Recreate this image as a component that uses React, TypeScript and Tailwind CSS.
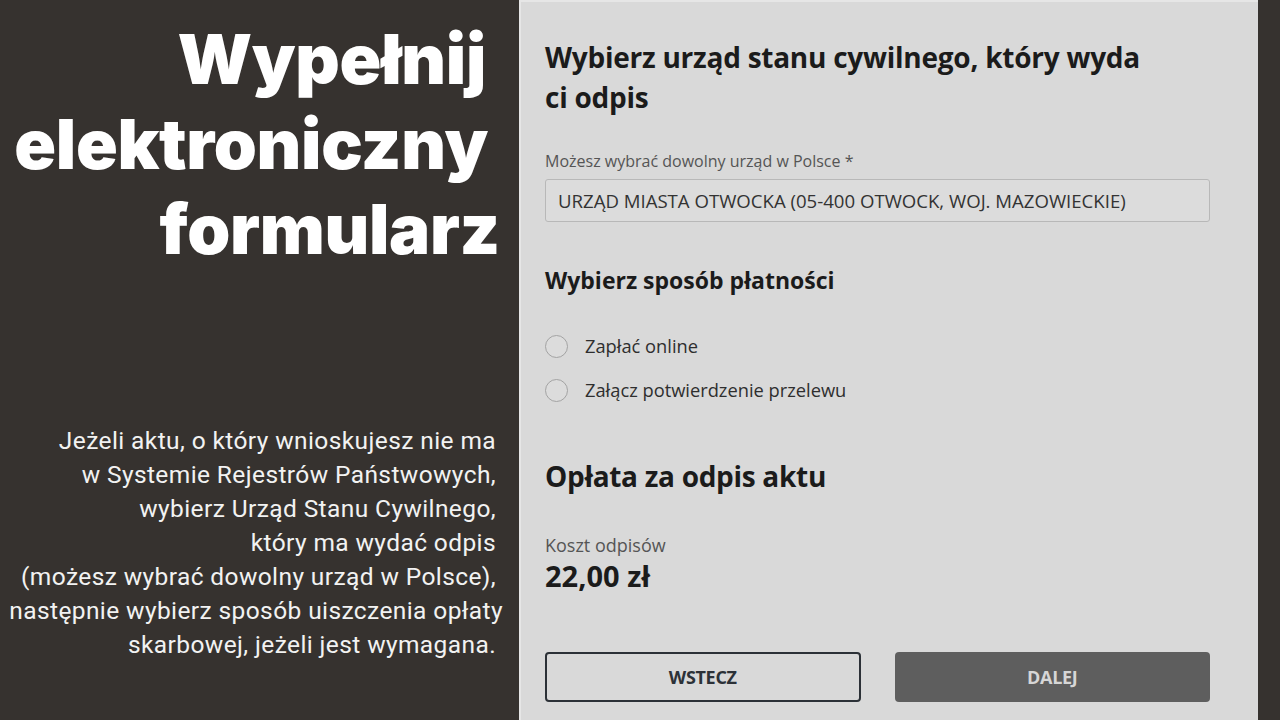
import { useState } from 'react'

type Payment = 'online' | 'przelew' | null

const paragraph = [
  'Jeżeli aktu, o który wnioskujesz nie ma',
  'w Systemie Rejestrów Państwowych,',
  'wybierz Urząd Stanu Cywilnego,',
  'który ma wydać odpis',
  '(możesz wybrać dowolny urząd w Polsce),',
  'następnie wybierz sposób uiszczenia opłaty',
  'skarbowej, jeżeli jest wymagana.',
]

function Radio({ label, checked, onClick }: { label: string; checked: boolean; onClick: () => void }) {
  return (
    <button onClick={onClick} className="flex items-center gap-[17px] text-left h-[24px]">
      <span className="w-[23px] h-[23px] rounded-full border-[1.5px] border-[#a3a3a3] bg-[#dcdcdc] flex items-center justify-center">
        {checked && <span className="w-[11px] h-[11px] rounded-full bg-[#333]" />}
      </span>
      <span className="text-[18.3px] leading-[24px] text-[#2e2e2e]">{label}</span>
    </button>
  )
}

export default function App() {
  const [payment, setPayment] = useState<Payment>(null)

  return (
    <div className="w-[1280px] h-[720px] bg-[#36322f] flex overflow-hidden">
      <div className="w-[519px] shrink-0 flex flex-col items-end pr-[19px]">
        <h1
          className="mt-[17px] text-right text-white font-black text-[69px] leading-[85px] tracking-[-0.3px]"
          style={{ fontFamily: 'Inter, "Liberation Sans", sans-serif' }}
        >
          <div className="pr-[14px]">Wypełnij</div>
          <div className="pr-[12px]">elektroniczny</div>
          <div>formularz</div>
        </h1>
        <div
          className="mt-[152px] pr-[4px] text-right text-[#f2f2f2] text-[24.5px] leading-[34px] tracking-[0.4px]"
          style={{ fontFamily: 'Roboto, "Liberation Sans", sans-serif' }}
        >
          {paragraph.map((line, i) => (
            <div key={line} className={i === 5 ? 'mr-[-7px]' : ''}>
              {line}
            </div>
          ))}
        </div>
      </div>

      <div
        className="w-[739px] shrink-0 bg-[#d9d9d9] border-l-2 border-t-2 border-[#e6e6e6] pl-[24px] pr-[48px] flex flex-col"
        style={{ fontFamily: '"Open Sans", "Liberation Sans", sans-serif' }}
      >
        <h2 className="mt-[35px] max-w-[610px] text-[28px] leading-[40px] font-bold text-[#1b1b1b] tracking-[-0.25px]">
          Wybierz urząd stanu cywilnego, który wyda ci odpis
        </h2>

        <label className="mt-[33px] text-[16px] leading-[22px] text-[#555]">
          Możesz wybrać dowolny urząd w Polsce *
        </label>
        <div className="mt-[7px] h-[43px] border border-[#b8b8b8] rounded-[3px] bg-[#dcdcdc] flex items-center px-[12px] text-[18.6px] text-[#333]">
          URZĄD MIASTA OTWOCKA (05-400 OTWOCK, WOJ. MAZOWIECKIE)
        </div>

        <h3 className="mt-[43px] text-[23px] leading-[30px] font-bold text-[#1b1b1b]">Wybierz sposób płatności</h3>

        <div className="mt-[39px] flex flex-col gap-[20px] items-start">
          <Radio label="Zapłać online" checked={payment === 'online'} onClick={() => setPayment('online')} />
          <Radio
            label="Załącz potwierdzenie przelewu"
            checked={payment === 'przelew'}
            onClick={() => setPayment('przelew')}
          />
        </div>

        <h3 className="mt-[56px] text-[28px] leading-[36px] font-bold text-[#1b1b1b] tracking-[-0.3px]">
          Opłata za odpis aktu
        </h3>

        <div className="mt-[39px] text-[18px] leading-[24px] text-[#555]">Koszt odpisów</div>
        <div className="mt-[1px] text-[29px] leading-[36px] font-bold text-[#1b1b1b]">22,00 zł</div>

        <div className="mt-[58px] grid grid-cols-2 gap-[34px]">
          <button className="h-[50px] rounded-[4px] border-2 border-[#2c3137] text-[18px] font-bold text-[#2c3137] tracking-[-0.3px]">
            WSTECZ
          </button>
          <button className="h-[50px] rounded-[4px] bg-[#5e5e5e] text-[18px] font-bold text-[#d6d6d6] tracking-[-0.3px]">
            DALEJ
          </button>
        </div>
      </div>
    </div>
  )
}
